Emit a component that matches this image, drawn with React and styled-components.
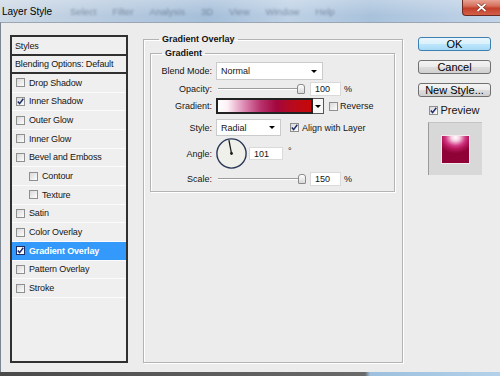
import React from 'react';
import styled, { createGlobalStyle } from 'styled-components';

const GlobalStyle = createGlobalStyle`
  html, body {
    margin: 0;
    padding: 0;
    width: 500px;
    height: 376px;
    overflow: hidden;
    background: #ececec;
  }
  body {
    font-family: "Liberation Sans", Arial, sans-serif;
    color: #151515;
  }
  * { box-sizing: border-box; }
`;

// Window frame
const Window = styled.div`
  width: 500px;
  height: 376px;
  display: flex;
  flex-direction: column;
`;

const TitleBar = styled.div`
  height: 22px;
  flex: none;
  display: flex;
  align-items: center;
  padding-left: 2px;
  background:
    linear-gradient(180deg, rgba(255,255,255,0.25), rgba(255,255,255,0) 70%),
    linear-gradient(90deg, #cdd9e6 0%, #b6cadf 22%, #a6bfda 42%, #bed1e5 58%, #a9c2dc 74%, #c2d4e8 100%);
`;

const TitleText = styled.span`
  font-size: 10px;
  color: #000;
`;

const BlurredMenu = styled.div`
  display: flex;
  gap: 16px;
  margin-left: 18px;
  font-size: 9.5px;
  color: #2b3a52;
  opacity: 0.45;
  filter: blur(1.3px);
`;

const CloseButton = styled.div`
  align-self: flex-start;
  margin-left: auto;
  width: 38px;
  height: 16px;
  display: flex;
  align-items: center;
  justify-content: center;
  border: 1px solid #6b2a22;
  border-top: none;
  border-right: none;
  border-radius: 0 0 0 4px;
  background: linear-gradient(180deg, #e8a394 0%, #d5705d 40%, #c43f2a 55%, #d4604a 100%);
`;

const Body = styled.div`
  flex: 1;
  display: flex;
  align-items: flex-start;
  padding-left: 9px;
  background: #ececec;
  border-top: 1px solid #9aa6b3;
  border-left: 1px solid #7c8692;
`;

const BottomStrip = styled.div`
  height: 4px;
  flex: none;
  background: linear-gradient(90deg, #4a4a4a 0%, #6a6a6a 73%, #9cc0de 74%, #b3d1ea 100%);
`;

// Styles list
const ListPanel = styled.div`
  width: 118px;
  height: 328px;
  margin-top: 12px;
  border: 2px solid #303030;
  background: #efefef;
  display: flex;
  flex-direction: column;
  font-size: 9px;
  letter-spacing: -0.15px;
`;

const ListHeader = styled.div`
  height: ${p => p.$h}px;
  flex: none;
  display: flex;
  align-items: center;
  padding-left: 3px;
  border-bottom: 2px solid #303030;
`;

const ListItem = styled.div`
  height: 18.67px;
  flex: none;
  display: flex;
  align-items: center;
  gap: 4px;
  padding-left: ${p => (p.$indent ? 17 : 4)}px;
  border-bottom: 1px solid #fbfbfb;
  background: ${p => (p.$active ? '#3399fa' : 'transparent')};
  color: ${p => (p.$active ? '#fff' : '#151515')};
  font-weight: ${p => (p.$active ? 'bold' : 'normal')};
`;

const Box = styled.span`
  width: 9px;
  height: 9px;
  flex: none;
  display: inline-flex;
  border: 1px solid ${p => (p.$onBlue ? '#1d2f6a' : '#8e8f8f')};
  background: ${p => (p.$onBlue ? '#fff' : 'linear-gradient(135deg, #d9d9d9, #fdfdfd)')};
`;

const Checkbox = ({ checked, onBlue }) => (
  <Box $onBlue={onBlue}>
    {checked && (
      <svg width="7" height="7" viewBox="0 0 7 7">
        <path d="M0.8 3.6 L2.6 5.6 L6.3 0.8" fill="none" stroke="#1f2d6b" strokeWidth="1.5" />
      </svg>
    )}
  </Box>
);

// Middle group boxes
const GroupBox = styled.fieldset`
  margin: ${p => p.$mt}px 0 0 ${p => p.$ml}px;
  width: ${p => p.$w}px;
  height: ${p => p.$h}px;
  padding: ${p => p.$pad};
  border: 1px solid #b3b3b3;
  box-shadow: inset 1px 1px 0 #fff, 1px 1px 0 #fff;
  min-width: 0;
`;

const Legend = styled.legend`
  font-size: 9px;
  line-height: 11px;
  font-weight: bold;
  padding: 0 3px;
  margin-left: ${p => p.$ml}px;
  color: #111;
`;

const Row = styled.div`
  display: grid;
  grid-template-columns: 61px auto;
  column-gap: 4px;
  align-items: center;
  height: ${p => p.$h}px;
  margin-top: ${p => p.$mt}px;
  font-size: 9px;
`;

const Label = styled.span`
  text-align: right;
`;

const Controls = styled.div`
  display: flex;
  align-items: center;
  height: 100%;
`;

const Select = styled.div`
  width: ${p => p.$w}px;
  height: 100%;
  display: flex;
  align-items: center;
  justify-content: space-between;
  padding: 0 5px 0 4px;
  background: #fff;
  border: 1px solid #cbcbcb;
`;

const Caret = styled.span`
  width: 0;
  height: 0;
  border-left: 3px solid transparent;
  border-right: 3px solid transparent;
  border-top: 3px solid #000;
`;

const NumberInput = styled.div`
  width: ${p => p.$w}px;
  height: ${p => p.$h}px;
  margin-left: ${p => p.$ml}px;
  display: flex;
  align-items: center;
  padding-left: 4px;
  background: #fff;
  border: 1px solid #dadada;
`;

const Unit = styled.span`
  margin-left: ${p => p.$ml ?? 3}px;
  color: #151515;
  align-self: ${p => (p.$top ? 'flex-start' : 'center')};
  margin-top: ${p => (p.$top ? 8 : 0)}px;
`;

const Slider = styled.div`
  position: relative;
  width: 90px;
  height: 100%;
`;

const Track = styled.div`
  position: absolute;
  left: 2px;
  right: 4px;
  top: 6px;
  height: 2px;
  border-top: 1px solid #9c9c9c;
  border-bottom: 1px solid #fff;
`;

const Thumb = styled.div`
  position: absolute;
  top: 2px;
  left: ${p => p.$pos}px;
  width: 8px;
  height: 10px;
  border: 1px solid #8a8a8a;
  border-radius: 3px 3px 1px 1px;
  background: linear-gradient(180deg, #fff, #d8d8d8);
`;

const GradientSwatch = styled.div`
  width: 97px;
  height: 100%;
  border: 2px solid #222;
  background: linear-gradient(90deg, #fff 0%, #fdf1f6 10%, #dd8ab3 28%, #b8316c 46%, #a2073d 63%, #b80a1d 80%, #c70808 100%);
`;

const DropButton = styled.div`
  width: 11px;
  height: 100%;
  display: flex;
  align-items: center;
  justify-content: center;
  background: #f7f7f7;
  border: 1px solid #555;
  border-left: none;
`;

const CheckLabel = styled.label`
  display: flex;
  align-items: center;
  gap: ${p => p.$gap ?? 2}px;
  margin-left: ${p => p.$ml}px;
`;

// Right column
const RightColumn = styled.div`
  width: 73px;
  margin: 14px 0 0 15px;
  display: flex;
  flex-direction: column;
  align-items: center;
`;

const Button = styled.div`
  width: 73px;
  height: 14px;
  margin-bottom: 9px;
  display: flex;
  align-items: center;
  justify-content: center;
  font-size: 11px;
  color: #000;
  border-radius: 3px;
  border: 1px solid ${p => (p.$primary ? '#3c7fb1' : '#707070')};
  background: ${p =>
    p.$primary
      ? 'linear-gradient(180deg, #eaf6fd 0%, #d9f0fc 50%, #bee6fd 51%, #a7d9f5 100%)'
      : 'linear-gradient(180deg, #f4f4f4 0%, #ebebeb 50%, #dddddd 51%, #cfcfcf 100%)'};
`;

const PreviewToggle = styled.label`
  display: flex;
  align-items: center;
  gap: 2px;
  margin-top: -2px;
  font-size: 11px;
  line-height: 12px;
`;

const PreviewWell = styled.div`
  width: 54px;
  height: 53px;
  margin-top: 6px;
  display: flex;
  align-items: center;
  justify-content: center;
  background: #d8d8d8;
  border-left: 1px solid #9a9a9a;
  border-top: 1px solid #c4c4c4;
`;

const PreviewSwatch = styled.div`
  width: 27px;
  height: 27px;
  background: radial-gradient(ellipse 70% 60% at 50% 5%, #fff 0%, #f6cfe0 22%, #d23a84 52%, #b4165a 72%, #8e0235 100%);
  box-shadow: 0 0 0 1px rgba(255, 240, 245, 0.7);
`;

const listItems = [
  { name: 'Drop Shadow' },
  { name: 'Inner Shadow', checked: true },
  { name: 'Outer Glow' },
  { name: 'Inner Glow' },
  { name: 'Bevel and Emboss' },
  { name: 'Contour', indent: true },
  { name: 'Texture', indent: true },
  { name: 'Satin' },
  { name: 'Color Overlay' },
  { name: 'Gradient Overlay', checked: true, active: true },
  { name: 'Pattern Overlay' },
  { name: 'Stroke' },
];

const menuWords = ['Select', 'Filter', 'Analysis', '3D', 'View', 'Window', 'Help'];

const AngleDial = ({ angle }) => {
  const rad = (angle * Math.PI) / 180;
  const x = 15.5 + Math.cos(rad) * 13.5;
  const y = 15.5 - Math.sin(rad) * 13.5;
  return (
    <svg width="31" height="31" viewBox="0 0 31 31">
      <circle cx="15.5" cy="15.5" r="14.6" fill="#f0f0ea" stroke="#2a3656" strokeWidth="1.4" />
      <line x1="15.5" y1="15.5" x2={x} y2={y} stroke="#1b1b1b" strokeWidth="1.3" />
      <circle cx="15.5" cy="15.5" r="1.4" fill="#1b1b1b" />
    </svg>
  );
};

export default function App() {
  return (
    <>
      <GlobalStyle />
      <Window>
        <TitleBar>
          <TitleText>Layer Style</TitleText>
          <BlurredMenu>
            {menuWords.map(w => <span key={w}>{w}</span>)}
          </BlurredMenu>
          <CloseButton>
            <svg width="11" height="9" viewBox="0 0 11 9">
              <path d="M1.5 1 L9.5 8 M9.5 1 L1.5 8" stroke="#7a2a20" strokeWidth="3" />
              <path d="M1.5 1 L9.5 8 M9.5 1 L1.5 8" stroke="#fff" strokeWidth="1.7" />
            </svg>
          </CloseButton>
        </TitleBar>

        <Body>
          <ListPanel>
            <ListHeader $h={19}>Styles</ListHeader>
            <ListHeader $h={18}>Blending Options: Default</ListHeader>
            {listItems.map(item => (
              <ListItem key={item.name} $indent={item.indent} $active={item.active}>
                <Checkbox checked={item.checked} onBlue={item.active} />
                {item.name}
              </ListItem>
            ))}
          </ListPanel>

          <GroupBox $mt={11} $ml={15} $w={260} $h={329} $pad="3px 7px 0 6px">
            <Legend $ml={9}>Gradient Overlay</Legend>
            <GroupBox $mt={0} $ml={0} $w={245} $h={144} $pad="3px 0 0 0">
              <Legend $ml={11}>Gradient</Legend>

              <Row $h={18} $mt={0}>
                <Label>Blend Mode:</Label>
                <Controls>
                  <Select $w={107}>Normal<Caret /></Select>
                </Controls>
              </Row>

              <Row $h={14} $mt={2}>
                <Label>Opacity:</Label>
                <Controls>
                  <Slider><Track /><Thumb $pos={81} /></Slider>
                  <NumberInput $w={31} $h={14} $ml={4}>100</NumberInput>
                  <Unit>%</Unit>
                </Controls>
              </Row>

              <Row $h={16} $mt={2}>
                <Label>Gradient:</Label>
                <Controls>
                  <GradientSwatch />
                  <DropButton><Caret /></DropButton>
                  <CheckLabel $ml={5}><Checkbox />Reverse</CheckLabel>
                </Controls>
              </Row>

              <Row $h={17} $mt={5}>
                <Label>Style:</Label>
                <Controls>
                  <Select $w={65}>Radial<Caret /></Select>
                  <CheckLabel $ml={9} $gap={3}><Checkbox checked />Align with Layer</CheckLabel>
                </Controls>
              </Row>

              <Row $h={31} $mt={2}>
                <Label>Angle:</Label>
                <Controls>
                  <AngleDial angle={101} />
                  <NumberInput $w={34} $h={13} $ml={2}>101</NumberInput>
                  <Unit $ml={5} $top>°</Unit>
                </Controls>
              </Row>

              <Row $h={14} $mt={3}>
                <Label>Scale:</Label>
                <Controls>
                  <Slider><Track /><Thumb $pos={82} /></Slider>
                  <NumberInput $w={31} $h={14} $ml={4}>150</NumberInput>
                  <Unit>%</Unit>
                </Controls>
              </Row>
            </GroupBox>
          </GroupBox>

          <RightColumn>
            <Button $primary>OK</Button>
            <Button>Cancel</Button>
            <Button>New Style...</Button>
            <PreviewToggle><Checkbox checked />Preview</PreviewToggle>
            <PreviewWell><PreviewSwatch /></PreviewWell>
          </RightColumn>
        </Body>
        <BottomStrip />
      </Window>
    </>
  );
}
